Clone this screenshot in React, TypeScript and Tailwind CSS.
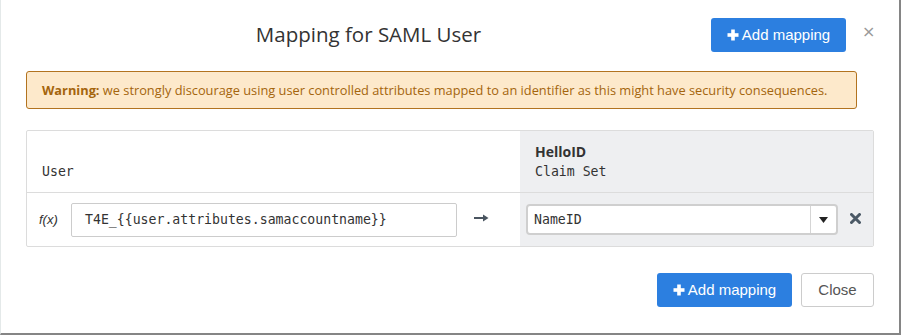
import React from "react";

const mono = { fontFamily: '"DejaVu Sans Mono", "Liberation Mono", monospace' };

function Plus() {
  return (
    <svg width="12" height="12" viewBox="0 0 12 12" className="inline-block">
      <rect x="4.2" y="0.5" width="3.6" height="11" fill="white" />
      <rect x="0.5" y="4.2" width="11" height="3.6" fill="white" />
    </svg>
  );
}

function AddButton() {
  return (
    <button
      className="flex items-center justify-center gap-[3px] w-[135px] h-[34px] rounded-[3px] bg-[#2c7fe0] text-white text-[15px]"
      style={{ fontFamily: '"Liberation Sans", Arial, sans-serif' }}
    >
      <Plus />
      <span>Add mapping</span>
    </button>
  );
}

export default function App() {
  return (
    <div className="w-[901px] h-[335px] bg-white border-l border-l-[#e4e9e9] border-r-2 border-r-[#858585] border-b-2 border-b-[#858585] box-border overflow-hidden">
      {/* header */}
      <div className="flex items-center pl-[25px] mt-[18px] h-[34px]">
        <div
          className="flex-1 text-center text-[20.5px] text-[#333] leading-none pb-[2px]"
          style={{ fontFamily: '"Open Sans", "Noto Sans", sans-serif' }}
        >
          Mapping for SAML User
        </div>
        <AddButton />
        <div className="w-[53px] pl-[16px] text-[#999] text-[16px] leading-none -mt-[6px]" style={{ fontFamily: '"DejaVu Sans", sans-serif' }}>
          ×
        </div>
      </div>

      {/* warning */}
      <div
        className="mt-[19px] ml-[25px] w-[831px] h-[38px] flex items-center px-[15px] pt-[2px] rounded-[3px] border border-[#b2731f] bg-[#fde9cb] text-[#a4650d] text-[12.8px]"
        style={{ fontFamily: '"Open Sans", "Noto Sans", sans-serif' }}
      >
        <span>
          <b className="font-bold">Warning:</b> we strongly discourage using user controlled attributes mapped to an identifier as this might have security consequences.
        </span>
      </div>

      {/* table */}
      <div className="mt-[21px] ml-[25px] w-[848px] h-[117px] border border-[#dcdcdc] rounded-[2px] flex flex-col overflow-hidden">
        <div className="flex h-[62px] border-b border-[#dcdcdc]">
          <div className="w-[493px] flex items-end pl-[15px] pb-[10px] text-[13.2px] text-[#333]" style={mono}>
            User
          </div>
          <div className="flex-1 bg-[#eeeff1] pl-[15px] pt-[12px] text-[#333]">
            <div className="text-[14px] font-bold leading-[18px]" style={{ fontFamily: '"Open Sans", "Noto Sans", sans-serif' }}>
              HelloID
            </div>
            <div className="text-[13.2px] leading-[22px]" style={mono}>
              Claim Set
            </div>
          </div>
        </div>
        <div className="flex flex-1">
          <div className="w-[493px] flex items-center">
            <span className="ml-[12px] w-[32px] text-[13px] italic text-[#333]" style={{ fontFamily: '"Liberation Sans", sans-serif' }}>
              f(x)
            </span>
            <div className="w-[386px] h-[34px] border border-[#cccccc] rounded-[2px] flex items-center pl-[13px] text-[13.2px] text-[#333]" style={mono}>
              T4E_{"{{"}user.attributes.samaccountname{"}}"}
            </div>
            <div className="ml-[17px] flex items-center -mt-[3px]">
              <svg width="15" height="8" viewBox="0 0 15 8">
                <rect x="0" y="3" width="10" height="2" fill="#4a5560" />
                <path d="M9 0.5 L14.5 4 L9 7.5 Z" fill="#4a5560" />
              </svg>
            </div>
          </div>
          <div className="flex-1 bg-[#eeeff1] flex items-center pl-[6px]">
            <div className="w-[312px] h-[31px] border-2 border-[#cfcfcf] rounded-[4px] bg-white flex items-center">
              <div className="flex-1 pl-[6px] text-[13.2px] text-[#333]" style={mono}>
                NameID
              </div>
              <div className="w-[26px] h-full border-l border-[#d5d5d5] flex items-center justify-center">
                <svg width="9" height="6" viewBox="0 0 9 6">
                  <path d="M0 0 L9 0 L4.5 6 Z" fill="#222" />
                </svg>
              </div>
            </div>
            <div className="ml-[12px] -mt-[3px]">
              <svg width="11" height="11" viewBox="0 0 11 11">
                <path d="M1.5 1.5 L9.5 9.5 M9.5 1.5 L1.5 9.5" stroke="#4b5966" strokeWidth="3" strokeLinecap="round" />
              </svg>
            </div>
          </div>
        </div>
      </div>

      {/* footer */}
      <div className="flex justify-end gap-[9px] mt-[26px] w-[873px]">
        <AddButton />
        <button
          className="w-[73px] h-[34px] rounded-[3px] border border-[#cccccc] bg-white text-[#555] text-[15px]"
          style={{ fontFamily: '"Liberation Sans", Arial, sans-serif' }}
        >
          Close
        </button>
      </div>
    </div>
  );
}
